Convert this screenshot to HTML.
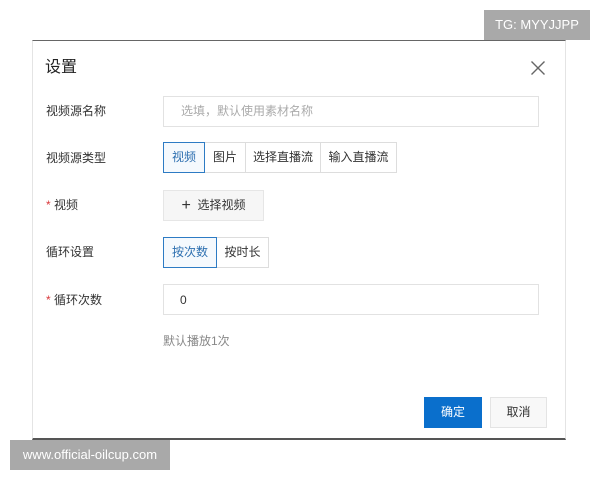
<!DOCTYPE html>
<html><head><meta charset="utf-8"><style>
*{margin:0;padding:0;box-sizing:border-box}
body{width:600px;height:480px;background:#fff;position:relative;overflow:hidden;font-family:"Liberation Sans","Noto Sans CJK SC",sans-serif;font-size:12px;color:#333}
.a{position:absolute}
.dlg{left:32px;top:40px;width:534px;height:400px;border:1px solid #e4e4e4;border-top:1px solid #666;border-bottom:2px solid #555;background:#fff}
.lbl{left:46px;font-size:12px;color:#333;line-height:16px}
.inp{border:1px solid #e2e2e2;background:#fff}
.seg{border:1px solid #ddd;background:#fff;text-align:center;color:#333;font-size:12px}
.sel{border-color:#2d7bc4;color:#2d6fb0;background:#f5f9fd}
.star{color:#d9383b}
</style></head><body>
<div class="a" style="left:484px;top:10px;width:106px;height:30px;background:#a9a9a9;color:#fff;font-size:13px;line-height:30px;text-align:center">TG: MYYJJPP</div>
<div class="a dlg"></div>
<div class="a" style="left:45px;top:58px;font-size:16px;line-height:20px;color:#222">设置</div>
<svg class="a" style="left:530px;top:60px" width="16" height="16" viewBox="0 0 16 16"><path d="M1.5 1.5L14.5 14.5M14.5 1.5L1.5 14.5" stroke="#666" stroke-width="1.4" fill="none"/></svg>

<div class="a lbl" style="top:103px">视频源名称</div>
<div class="a inp" style="left:163px;top:96px;width:376px;height:31px"></div>
<div class="a" style="left:181px;top:103px;color:#aaa;line-height:16px">选填，默认使用素材名称</div>

<div class="a lbl" style="top:150px">视频源类型</div>
<div class="a seg" style="left:204px;top:142px;width:42px;height:31px;line-height:29px">图片</div>
<div class="a seg" style="left:245px;top:142px;width:76px;height:31px;line-height:29px">选择直播流</div>
<div class="a seg" style="left:320px;top:142px;width:77px;height:31px;line-height:29px">输入直播流</div>
<div class="a seg sel" style="left:163px;top:142px;width:42px;height:31px;line-height:29px">视频</div>

<div class="a lbl" style="top:197px"><span class="star">*</span> 视频</div>
<div class="a seg" style="left:163px;top:190px;width:101px;height:31px;line-height:29px;background:#f6f6f6;border-color:#e6e6e6"><span style="font-size:16px;vertical-align:-1px">+</span>&nbsp; 选择视频</div>

<div class="a lbl" style="top:244px">循环设置</div>
<div class="a seg" style="left:216px;top:237px;width:53px;height:31px;line-height:29px">按时长</div>
<div class="a seg sel" style="left:163px;top:237px;width:54px;height:31px;line-height:29px">按次数</div>

<div class="a lbl" style="top:292px"><span class="star">*</span> 循环次数</div>
<div class="a inp" style="left:163px;top:284px;width:376px;height:31px"></div>
<div class="a" style="left:180px;top:292px;line-height:16px">0</div>

<div class="a" style="left:163px;top:333px;color:#888;line-height:16px">默认播放1次</div>

<div class="a" style="left:424px;top:397px;width:58px;height:31px;background:#0a6fcc;color:#fff;text-align:center;line-height:31px">确定</div>
<div class="a" style="left:490px;top:397px;width:57px;height:31px;background:#f8f8f8;border:1px solid #e4e4e4;text-align:center;line-height:29px">取消</div>

<div class="a" style="left:10px;top:440px;width:160px;height:30px;background:#a9a9a9;color:#fff;font-size:13px;line-height:30px;text-align:center">www.official-oilcup.com</div>
</body></html>
